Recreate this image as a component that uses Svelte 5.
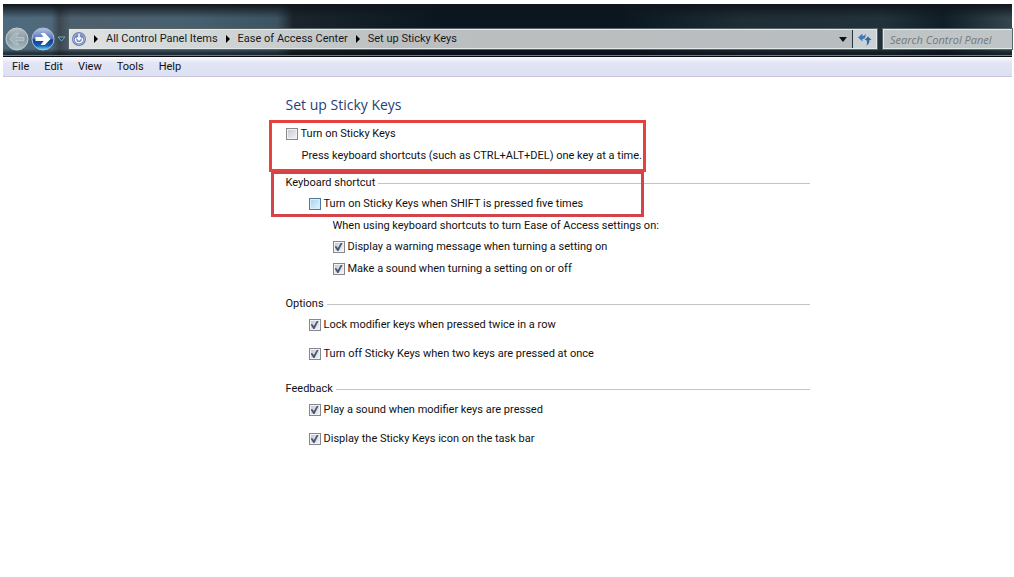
<script lang="ts">
  let address = $state('Set up Sticky Keys');
  let search = $state('');

  let stickyKeys = $state(false);
  let shiftFiveTimes = $state(false);

  let warnings = $state([
    { id: 'warn-message', label: 'Display a warning message when turning a setting on', checked: true },
    { id: 'warn-sound', label: 'Make a sound when turning a setting on or off', checked: true },
  ]);

  let sections = $state([
    {
      title: 'Options',
      items: [
        { id: 'lock-twice', label: 'Lock modifier keys when pressed twice in a row', checked: true },
        { id: 'two-keys', label: 'Turn off Sticky Keys when two keys are pressed at once', checked: true },
      ],
    },
    {
      title: 'Feedback',
      items: [
        { id: 'play-sound', label: 'Play a sound when modifier keys are pressed', checked: true },
        { id: 'taskbar-icon', label: 'Display the Sticky Keys icon on the task bar', checked: true },
      ],
    },
  ]);

  const menus = ['File', 'Edit', 'View', 'Tools', 'Help'];
  const crumbs = ['All Control Panel Items', 'Ease of Access Center'];
</script>

<div class="window">
  <header class="glass">
    <div class="nav">
      <button aria-label="Back">
        <svg width="24" height="24" viewBox="0 0 24 24">
          <defs>
            <linearGradient id="back" x1="0" y1="0" x2="0" y2="1">
              <stop offset="0" stop-color="#b4bfc3" />
              <stop offset="0.5" stop-color="#8597a0" />
              <stop offset="1" stop-color="#a9bfc6" />
            </linearGradient>
          </defs>
          <circle cx="12" cy="12" r="11" fill="url(#back)" stroke="#c3cdcf" />
          <path d="M4.500 12L10.300 6.300h3.200L10.800 10.300H19v3.400h-8.200l2.700 4h-3.200z" fill="#a3b2b9" stroke="#c0cace" stroke-width=".8" />
        </svg>
      </button>
      <button aria-label="Forward">
        <svg width="24" height="24" viewBox="0 0 24 24">
          <defs>
            <linearGradient id="forward" x1="0" y1="0" x2="0" y2="1">
              <stop offset="0" stop-color="#b3c4e4" />
              <stop offset="0.48" stop-color="#5877b8" />
              <stop offset="0.54" stop-color="#133a86" />
              <stop offset="0.8" stop-color="#1762b4" />
              <stop offset="1" stop-color="#6fdcfa" />
            </linearGradient>
          </defs>
          <circle cx="12" cy="12" r="11" fill="url(#forward)" stroke="#a9bedb" />
          <path d="M4.500 10h8L9.700 6h4L19.500 12l-5.800 6h-4l2.800-4h-8z" fill="#fff" />
        </svg>
      </button>
      <button aria-label="Recent pages">
        <svg width="9" height="6" viewBox="0 0 9 6"><path d="M1 1h7L4.500 5z" fill="#1d4a5e" stroke="#7fa9b8" /></svg>
      </button>
    </div>

    <div class="address">
      <svg class="place" width="14" height="14" viewBox="0 0 14 14">
        <circle cx="7" cy="7" r="6.400" fill="#c3cde8" stroke="#6e80b4" stroke-width="1.200" />
        <circle cx="7" cy="7" r="5.200" fill="#7488c2" />
        <path d="M3.700 6.200a3.500 3.500 0 1 0 6.600 0" fill="none" stroke="#fff" stroke-width="1.400" />
        <path d="M7 1.800v5M4.800 5.400L7 7.800l2.200-2.400" fill="none" stroke="#fff" stroke-width="1.500" />
      </svg>
      <nav aria-label="Address">
        {#each crumbs as crumb}
          <svg width="4" height="8" viewBox="0 0 4 8"><path d="M0 0l4 4-4 4z" /></svg>
          <a href="#up">{crumb}</a>
        {/each}
        <svg width="4" height="8" viewBox="0 0 4 8"><path d="M0 0l4 4-4 4z" /></svg>
        <a href="#here" aria-current="page">{address}</a>
      </nav>
      <button class="drop" aria-label="Previous locations">
        <svg width="8" height="5" viewBox="0 0 8 5"><path d="M0 0h8L4 5z" fill="#0b0f18" /></svg>
      </button>
      <button class="refresh" aria-label="Refresh">
        <svg width="14" height="13" viewBox="0 0 14 13">
          <path d="M0 4.500L4.500.5V3Q7.500 2.500 7.500 0 8.500 6 4.500 6v2.500z" fill="#4479b5" />
          <path d="M6.500 7L10 3.500 13.500 7H11.500Q11.500 11 8.500 12.500 9.500 10 8.500 7z" fill="#3568a4" />
        </svg>
      </button>
    </div>

    <input class="search" type="text" aria-label="Search Control Panel" placeholder="Search Control Panel" bind:value={search} />
  </header>

  <div class="menubar" role="menubar">
    {#each menus as menu}
      <button role="menuitem">{menu}</button>
    {/each}
  </div>

  <main>
    <h1>Set up Sticky Keys</h1>

    <div class="marked first">
      <label class="row"><input type="checkbox" bind:checked={stickyKeys} />Turn on Sticky Keys</label>
      <p class="hint">Press keyboard shortcuts (such as CTRL+ALT+DEL) one key at a time.</p>
    </div>

    <section>
      <div class="marked second">
        <h2>Keyboard shortcut</h2>
        <label class="row indent">
          <input class="hot" type="checkbox" bind:checked={shiftFiveTimes} />Turn on Sticky Keys when SHIFT is pressed five times
        </label>
      </div>
      <div class="nested">
        <p>When using keyboard shortcuts to turn Ease of Access settings on:</p>
        {#each warnings as item (item.id)}
          <label class="row"><input type="checkbox" bind:checked={item.checked} />{item.label}</label>
        {/each}
      </div>
    </section>

    {#each sections as section}
      <section>
        <h2>{section.title}</h2>
        <div class="items">
          {#each section.items as item (item.id)}
            <label class="row indent"><input type="checkbox" bind:checked={item.checked} />{item.label}</label>
          {/each}
        </div>
      </section>
    {/each}
  </main>
</div>

<style>
  :global(body) {
    background: #fff;
  }
  .window {
    margin: 4px 2px 0 3px;
    font-family: Roboto, 'Open Sans', sans-serif;
    font-size: 11px;
    line-height: 20px;
    color: #111;
  }
  button {
    padding: 0;
    border: 0;
    background: none;
    font: inherit;
    color: inherit;
  }
  svg {
    display: block;
    flex: none;
  }

  .glass {
    display: flex;
    align-items: center;
    gap: 6px;
    height: 53px;
    box-sizing: border-box;
    padding-top: 18px;
    border-bottom: 1px solid #05090d;
    background:
      linear-gradient(to bottom, #10161c 0, rgba(12, 18, 24, 0) 14px),
      linear-gradient(to bottom, rgba(8, 14, 18, 0) 45px, rgba(8, 14, 18, 0.6) 49px),
      linear-gradient(to right, #4c6a7c 0, #50697a 48px, #3b4750 56px, #4d5f6c 68px, #48606f 180px, #3c5362 274px, rgba(28, 37, 44, 0) 290px),
      linear-gradient(to right, #1c252c 280px, #0a1720 440px, #0a1720 620px, #1f2d35 740px, #22323a 880px, #0f1e27 940px, #35464f 100%);
    box-shadow: inset 0 -1px #6d7d82;
  }
  .nav {
    display: flex;
    align-items: center;
    gap: 2px;
    padding-left: 2px;
  }
  .address {
    flex: 1;
    display: flex;
    align-items: center;
    height: 20px;
    box-sizing: border-box;
    margin-left: -3px;
    border: 1px solid #e3e9e9;
    outline: 1px solid #58666b;
    background: linear-gradient(to right, #dfe2e1, #d0d3d4 160px, #bcbfc0 320px, #b8bdbf);
  }
  .place {
    margin-left: 2px;
  }
  nav {
    flex: 1;
    display: flex;
    align-items: center;
    gap: 8px;
    padding-left: 8px;
    white-space: nowrap;
  }
  nav a {
    color: #15191c;
    text-decoration: none;
  }
  .drop,
  .refresh {
    display: flex;
    align-items: center;
    justify-content: center;
    height: 100%;
    width: 18px;
  }
  .refresh {
    width: 24px;
    border-left: 1px solid #2a3338;
    background: #cbd2d5;
  }
  .search {
    width: 129px;
    height: 20px;
    box-sizing: border-box;
    padding: 0 6px;
    border: 1px solid #e3e9e9;
    border-right: 0;
    border-radius: 0;
    background: #bfc5c6;
    font-family: 'Open Sans', sans-serif;
    font-size: 11px;
    font-style: italic;
    outline: 1px solid #58666b;
  }
  .search::placeholder {
    color: #73797c;
    opacity: 1;
  }

  .menubar {
    display: flex;
    gap: 15px;
    height: 20px;
    box-sizing: border-box;
    padding-left: 9px;
    border-bottom: 1px solid #c8c5d8;
    background: linear-gradient(to bottom, #fafbff, #e2e5f5 6px, #dde0f2);
  }

  main {
    margin-left: 28%;
    margin-right: 20%;
    padding-top: 18px;
    white-space: nowrap;
  }
  h1,
  h2,
  p {
    margin: 0;
    font-size: inherit;
    font-weight: normal;
  }
  h1 {
    font-family: 'Open Sans', sans-serif;
    font-size: 14px;
    color: #243f77;
  }
  h2 {
    display: flex;
    align-items: center;
    gap: 3px;
  }
  h2::after {
    content: '';
    flex: 1;
    height: 1px;
    background: #c4c4c6;
  }
  section {
    margin-top: 15px;
  }

  /* red call-out frames laid over the two settings */
  .marked {
    position: relative;
  }
  .marked::after {
    content: '';
    position: absolute;
    box-sizing: border-box;
    border: 3px solid #e6403f;
    pointer-events: none;
  }
  .first {
    margin-top: 9px;
  }
  .first::after {
    inset: -4px auto -6px -17px;
    width: 377px;
  }
  .first + section {
    margin-top: 7px;
  }
  .second::after {
    inset: -2px auto -3px -15px;
    width: 373px;
    border-color: #d2434a;
  }
  .second .row {
    margin-top: 1px;
  }

  .row {
    display: flex;
    align-items: center;
    gap: 3px;
  }
  .hint {
    margin-top: 2px;
    padding-left: 16px;
  }
  .indent {
    padding-left: 23px;
  }
  .nested {
    display: flex;
    flex-direction: column;
    gap: 1px;
    margin-top: 2px;
    padding-left: 47px;
  }
  .nested .row + .row {
    margin-top: 1px;
  }
  .items {
    display: flex;
    flex-direction: column;
    gap: 9px;
    margin-top: 1px;
  }

  input[type='checkbox'] {
    appearance: none;
    display: grid;
    place-items: center;
    width: 12px;
    height: 12px;
    box-sizing: border-box;
    margin: 0;
    border: 1px solid #85898c;
    background: linear-gradient(135deg, #c3c7cc, #f4f5f6);
    box-shadow: inset 0 0 0 1px #f1f2f3;
  }
  input[type='checkbox'].hot {
    border-color: #54789a;
    background: linear-gradient(135deg, #a5d3ec, #e3f5fd);
    box-shadow: inset 0 0 0 1px #d8f0fb;
  }
  input[type='checkbox']:checked::before {
    content: '';
    width: 8px;
    height: 8px;
    background: #4a5678;
    clip-path: polygon(0 45%, 20% 38%, 42% 62%, 78% 0, 100% 0, 50% 100%, 35% 100%);
  }
</style>
